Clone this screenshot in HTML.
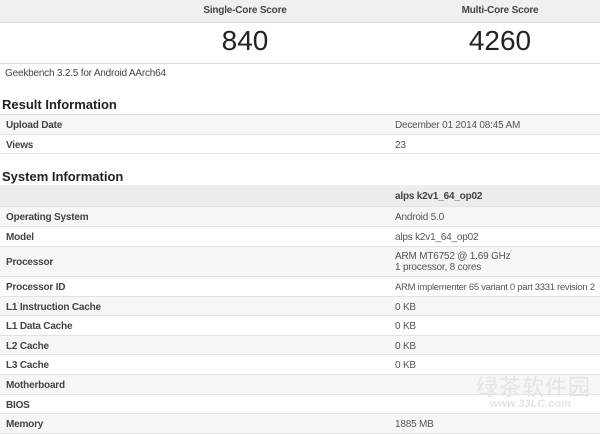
<!DOCTYPE html>
<html><head><style>
body{margin:0;width:600px;height:430px;overflow:hidden;background:#fff;font-family:"Liberation Sans",Arial,sans-serif;color:#333;position:relative}
.a{position:absolute}
.row{position:absolute;left:0;width:600px;border-bottom:1px solid #e2e2e2;font-size:10px;letter-spacing:-0.2px}
.row .l{position:absolute;left:6px;font-weight:bold;color:#444;margin-top:1px}
.row .v{position:absolute;left:395px;color:#555;white-space:nowrap;margin-top:1px}
.g{background:#f6f6f6}
h2{position:absolute;left:2px;margin:0;font-size:13px;font-weight:bold;color:#222}
</style></head><body>
<div class="a" style="left:0;top:0;width:600px;height:22px;background:#f0f0f0;border-bottom:1px solid #ddd"></div>
<div class="a" style="left:195px;top:5px;width:100px;text-align:center;font-size:10px;font-weight:bold;color:#444;letter-spacing:-0.2px">Single-Core Score</div>
<div class="a" style="left:450px;top:5px;width:100px;text-align:center;font-size:10px;font-weight:bold;color:#444;letter-spacing:-0.2px">Multi-Core Score</div>
<div class="a" style="left:195px;top:25px;width:100px;text-align:center;font-size:28px;color:#222">840</div>
<div class="a" style="left:430px;top:25px;width:140px;text-align:center;font-size:28px;color:#222">4260</div>
<div class="a" style="left:0;top:63px;width:600px;border-top:1px solid #ddd"></div>
<div class="a" style="left:5px;top:68px;font-size:10px;color:#444;letter-spacing:-0.2px">Geekbench 3.2.5 for Android AArch64</div>
<h2 style="top:97px">Result Information</h2>
<div class="a" style="left:0;top:114px;width:600px;border-top:1px solid #ddd"></div>
<div class="row g" style="top:115px;height:19px"><span class="l" style="top:4px">Upload Date</span><span class="v" style="top:4px">December 01 2014 08:45 AM</span></div>
<div class="row" style="top:135px;height:18px"><span class="l" style="top:4px">Views</span><span class="v" style="top:4px">23</span></div>
<h2 style="top:169px">System Information</h2>
<div class="row" style="top:185px;height:21px;background:#ededed"><span class="v" style="top:5px;font-weight:bold;color:#444">alps k2v1_64_op02</span></div>
<div class="row g" style="top:207px;height:19px"><span class="l" style="top:4px">Operating System</span><span class="v" style="top:4px">Android 5.0</span></div>
<div class="row" style="top:227px;height:19px"><span class="l" style="top:4px">Model</span><span class="v" style="top:4px">alps k2v1_64_op02</span></div>
<div class="row g" style="top:247px;height:29px"><span class="l" style="top:9px">Processor</span><span class="v" style="top:3px;line-height:11px">ARM MT6752 @ 1.69 GHz<br>1 processor, 8 cores</span></div>
<div class="row" style="top:277px;height:19px"><span class="l" style="top:4px">Processor ID</span><span class="v" style="top:4px;font-size:9.5px;letter-spacing:-0.3px">ARM implementer 65 variant 0 part 3331 revision 2</span></div>
<div class="row g" style="top:297px;height:18px"><span class="l" style="top:4px">L1 Instruction Cache</span><span class="v" style="top:4px">0 KB</span></div>
<div class="row" style="top:316px;height:19px"><span class="l" style="top:4px">L1 Data Cache</span><span class="v" style="top:4px">0 KB</span></div>
<div class="row g" style="top:336px;height:18px"><span class="l" style="top:4px">L2 Cache</span><span class="v" style="top:4px">0 KB</span></div>
<div class="row" style="top:355px;height:19px"><span class="l" style="top:4px">L3 Cache</span><span class="v" style="top:4px">0 KB</span></div>
<div class="row g" style="top:375px;height:19px"><span class="l" style="top:4px">Motherboard</span></div>
<div class="row" style="top:395px;height:18px"><span class="l" style="top:4px">BIOS</span></div>
<div class="row g" style="top:414px;height:19px"><span class="l" style="top:4px">Memory</span><span class="v" style="top:4px">1885 MB</span></div>
<div class="a" style="left:476px;top:370px;font-size:22px;color:#e4e4e4;font-family:'Liberation Sans','Noto Sans CJK SC',sans-serif;letter-spacing:1px">绿茶软件园</div>
<div class="a" style="left:490px;top:398px;font-size:11px;color:#e4e4e4;font-style:italic;font-weight:bold">www.33LC.com</div>
</body></html>
